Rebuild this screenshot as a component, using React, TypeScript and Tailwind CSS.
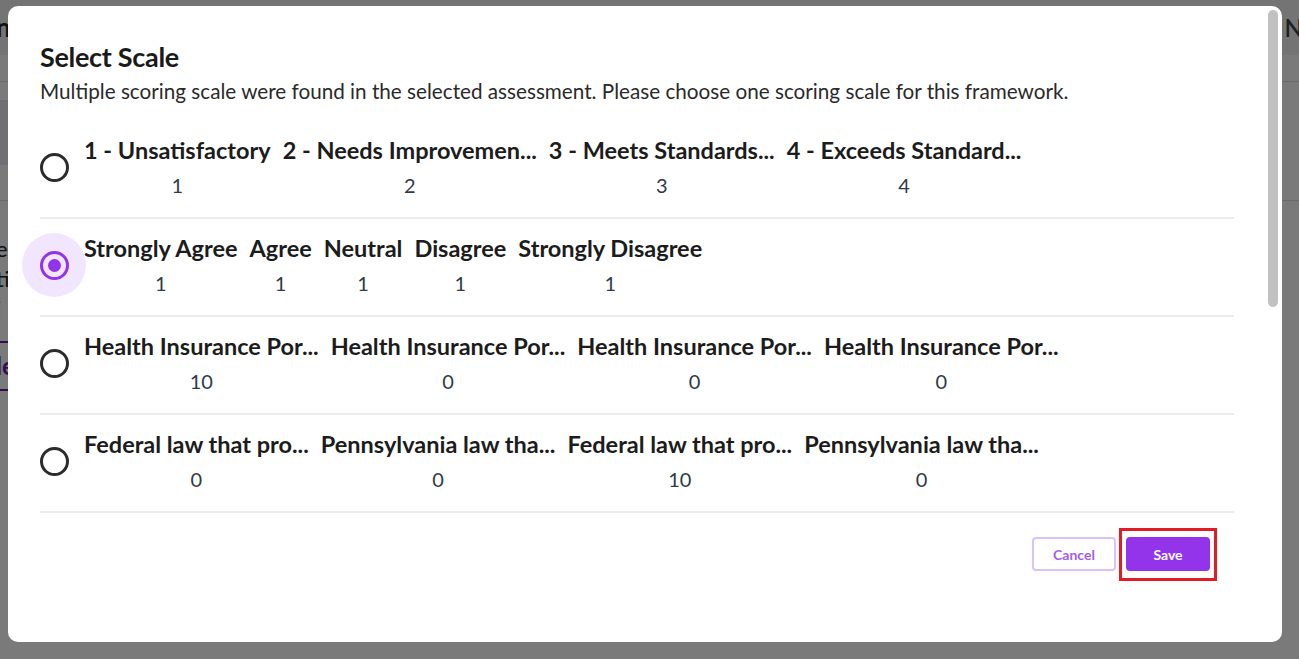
import { useState } from 'react'

type Scale = {
  id: string
  items: { label: string; value: string }[]
}

const SCALES: Scale[] = [
  {
    id: 'performance',
    items: [
      { label: '1 - Unsatisfactory', value: '1' },
      { label: '2 - Needs Improvemen...', value: '2' },
      { label: '3 - Meets Standards...', value: '3' },
      { label: '4 - Exceeds Standard...', value: '4' },
    ],
  },
  {
    id: 'agreement',
    items: [
      { label: 'Strongly Agree', value: '1' },
      { label: 'Agree', value: '1' },
      { label: 'Neutral', value: '1' },
      { label: 'Disagree', value: '1' },
      { label: 'Strongly Disagree', value: '1' },
    ],
  },
  {
    id: 'health',
    items: [
      { label: 'Health Insurance Por...', value: '10' },
      { label: 'Health Insurance Por...', value: '0' },
      { label: 'Health Insurance Por...', value: '0' },
      { label: 'Health Insurance Por...', value: '0' },
    ],
  },
  {
    id: 'law',
    items: [
      { label: 'Federal law that pro...', value: '0' },
      { label: 'Pennsylvania law tha...', value: '0' },
      { label: 'Federal law that pro...', value: '10' },
      { label: 'Pennsylvania law tha...', value: '0' },
    ],
  },
]

function Radio({ checked }: { checked: boolean }) {
  return (
    <span className="relative -mt-[4px] flex w-[44px] shrink-0 items-center">
      {checked && (
        <span className="absolute -left-[18px] top-1/2 h-[64px] w-[64px] -translate-y-1/2 rounded-full bg-[#f1e6fd]" />
      )}
      <span
        className={
          checked
            ? 'relative flex h-[29px] w-[29px] items-center justify-center rounded-full border-[3px] border-[#9333ea]'
            : 'relative flex h-[29px] w-[29px] items-center justify-center rounded-full border-[3px] border-[#2b2b2b]'
        }
      >
        {checked && <span className="h-[13px] w-[13px] rounded-full bg-[#9333ea]" />}
      </span>
    </span>
  )
}

function BackgroundPage() {
  return (
    <div className="flex h-[659px] w-[1299px] flex-col bg-white">
      <div className="flex h-[55px] items-center justify-between bg-[#f2f2f2]">
        <span className="-ml-[4px] text-[26px] font-bold text-[#222]">ng</span>
        <span className="mr-[-4px] text-[24px] font-semibold text-[#444]">N</span>
      </div>
      <div className="h-[27px] border-b border-[#ddd]" />
      <div className="mt-[18px] h-[65px] w-[420px] bg-[#e9e9f2]" />
      <div className="mt-[35px] border-b border-[#ddd]" />
      <div className="-ml-[4px] mt-[36px] flex flex-col gap-[6px] text-[22px] leading-[24px] text-[#222]">
        <span>e</span>
        <span>ti</span>
        <span>i</span>
      </div>
      <div className="-ml-[4px] mt-[20px] flex h-[50px] w-[120px] items-center border-y-2 border-[#6b21a8] text-[24px] font-bold text-[#6b21a8]">
        le
      </div>
    </div>
  )
}

export default function App() {
  const [selected, setSelected] = useState('agreement')

  return (
    <div className="relative h-[659px] w-[1299px] overflow-hidden font-['Lato',sans-serif]">
      <BackgroundPage />
      <div className="absolute inset-0 bg-black/[0.52]" />

      <div className="absolute left-[8px] top-[6px] flex h-[636px] w-[1274px] flex-col rounded-[10px] bg-white pl-[32px] pr-[48px] pt-[34px]">
        <h2 className="text-[27px] font-bold leading-[34px] tracking-[-0.3px] text-[#1a1a1a]">Select Scale</h2>
        <p className="mt-[4px] text-[20.7px] leading-[26px] text-[#2a2a2a]">
          Multiple scoring scale were found in the selected assessment. Please choose one scoring scale for this framework.
        </p>

        <div className="mt-[17px] flex flex-col">
          {SCALES.map(scale => (
            <button
              key={scale.id}
              type="button"
              onClick={() => setSelected(scale.id)}
              className="flex h-[98px] items-center border-b-2 border-[#ececec] text-left"
            >
              <Radio checked={selected === scale.id} />
              <div className="-mt-[3px] flex gap-[12px]">
                {scale.items.map((item, i) => (
                  <div key={i} className="flex flex-col items-center">
                    <span className="whitespace-nowrap text-[23.5px] font-bold leading-[30px] text-[#1c1c1c]">
                      {item.label}
                    </span>
                    <span className="mt-[5px] text-[20px] leading-[30px] text-[#2f3b48]">{item.value}</span>
                  </div>
                ))}
              </div>
            </button>
          ))}
        </div>

        <div className="mt-[24px] flex justify-end gap-[10px] pr-[24px]">
          <button
            type="button"
            className="h-[34px] w-[84px] rounded-[4px] border-2 border-[#dcc2fb] bg-white text-[14px] font-bold text-[#a45ee8]"
          >
            Cancel
          </button>
          <div className="relative">
            <span className="pointer-events-none absolute -bottom-[10px] -left-[7px] -right-[7px] -top-[9px] border-[3px] border-[#e31b23]" />
            <button
              type="button"
              className="h-[34px] w-[84px] rounded-[4px] bg-[#9333ea] text-[14px] font-bold text-white"
            >
              Save
            </button>
          </div>
        </div>

        <div className="absolute right-[4px] top-[4px] h-[297px] w-[10px] rounded-full bg-[#c1c1c1]" />
      </div>
    </div>
  )
}
